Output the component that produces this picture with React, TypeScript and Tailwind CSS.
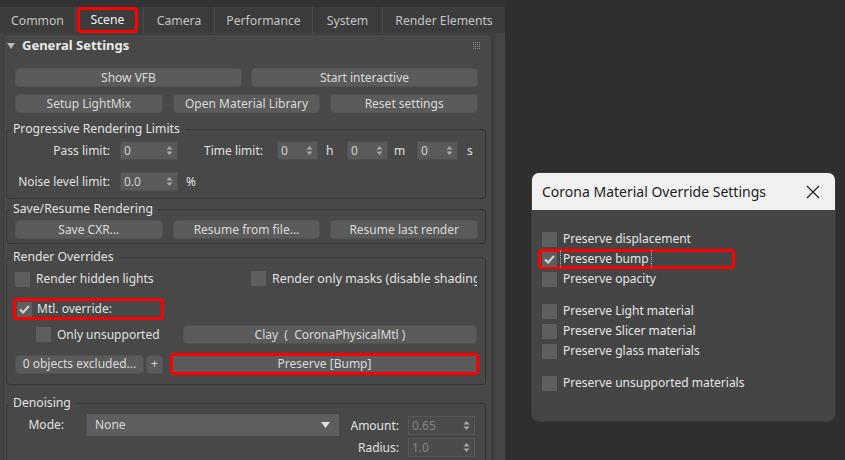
import React from 'react';

type Kids = { children?: React.ReactNode; className?: string };

function Arrows() {
  return (
    <svg width="7" height="11" viewBox="0 0 7 11" className="shrink-0">
      <path d="M0.5 4.5 L3.5 1 L6.5 4.5 Z" fill="#a8a8a8" />
      <path d="M0.5 6.5 L3.5 10 L6.5 6.5 Z" fill="#a8a8a8" />
    </svg>
  );
}

function Check() {
  return (
    <svg width="11" height="9" viewBox="0 0 11 9">
      <path d="M1 4.5 L4 7.5 L10 1" fill="none" stroke="#cfcfcf" strokeWidth="2.2" />
    </svg>
  );
}

function Box({ checked = false }: { checked?: boolean }) {
  return (
    <div className="w-[15px] h-[15px] shrink-0 bg-[#5e5e5e] flex items-center justify-center">
      {checked && <Check />}
    </div>
  );
}

function Btn({ children, className = '' }: Kids) {
  return (
    <div
      className={`h-[19px] rounded-[4px] bg-[#5b5b5b] border border-[#525252] text-[#dadada] flex items-center justify-center whitespace-nowrap ${className}`}
    >
      {children}
    </div>
  );
}

function Spinner({
  value,
  className = '',
  disabled = false,
}: {
  value: string;
  className?: string;
  disabled?: boolean;
}) {
  return (
    <div
      className={`h-[19px] flex items-center pr-[4px] border ${
        disabled
          ? 'bg-[#4b4b4b] border-[#575757] text-[#858585]'
          : 'bg-[#5a5a5a] border-[#505050] text-[#d2d2d2]'
      } ${className}`}
    >
      <span className="flex-1 pl-[3px]">{value}</span>
      <Arrows />
    </div>
  );
}

function Group({ label, children, className = '' }: Kids & { label: string }) {
  return (
    <fieldset className={`ml-[2px] w-[480px] border border-[#353535] rounded-[4px] ${className}`}>
      <legend className="ml-[3px] pl-[3px] pr-[5px] leading-[16px] text-[12.2px] text-[#e2e2e2]">
        {label}
      </legend>
      {children}
    </fieldset>
  );
}

const tabs = [
  { name: 'Common', w: 'w-[76px]' },
  { name: 'Scene', w: 'w-[68px]' },
  { name: 'Camera', w: 'w-[71px]' },
  { name: 'Performance', w: 'w-[98px]' },
  { name: 'System', w: 'w-[70px]' },
];

function TabBar() {
  return (
    <div className="h-[26px] flex bg-[#3c3c3c] text-[12.2px] text-[#c4c4c4]">
      {tabs.map((t) =>
        t.name === 'Scene' ? (
          <div key={t.name} className={`${t.w} border-r border-[#4b4b4b] flex`}>
            <div className="ml-[1px] w-[61px] h-[26px] border-[3px] border-[#ff0000] rounded-[4px] flex items-center justify-center pt-px text-[#f2f2f2]">
              Scene
            </div>
          </div>
        ) : (
          <div
            key={t.name}
            className={`${t.w} border-r border-[#4b4b4b] flex items-center justify-center pt-[2px]`}
          >
            {t.name}
          </div>
        )
      )}
      <div className="flex-1 flex items-center justify-center pt-[2px]">Render Elements</div>
    </div>
  );
}

function Grip() {
  const dots = [];
  for (let r = 0; r < 4; r++)
    for (let c = 0; c < 4; c++)
      dots.push(<rect key={`${r}-${c}`} x={c * 2} y={r * 2} width="1" height="1" fill="#8c8c8c" />);
  return (
    <svg width="7" height="7" viewBox="0 0 7 7" className="ml-auto mr-[11px]">
      {dots}
    </svg>
  );
}

function Rollout() {
  return (
    <div className="w-[489px] shrink-0 bg-[#484848] border border-b-0 border-[#3a3a3a] rounded-t-[5px] overflow-hidden">
      {/* 見出し */}
      <div className="h-[21px] flex items-center">
        <svg width="8" height="6" viewBox="0 0 8 6" className="ml-[3px]">
          <path d="M0 0 L8 0 L4 6 Z" fill="#b9b9b9" />
        </svg>
        <span className="ml-[7px] text-[13px] font-bold text-[#e8e8e8]">General Settings</span>
        <Grip />
      </div>

      <div className="ml-[11px] w-[463px] mt-[12px] grid grid-cols-2 gap-[9px]">
        <Btn>Show VFB</Btn>
        <Btn>Start interactive</Btn>
      </div>
      <div className="ml-[11px] w-[463px] mt-[7px] grid grid-cols-3 gap-[10px]">
        <Btn>Setup LightMix</Btn>
        <Btn>Open Material Library</Btn>
        <Btn>Reset settings</Btn>
      </div>

      {/* Progressive Rendering Limits */}
      <Group label="Progressive Rendering Limits" className="mt-[8px] pb-[7px]">
        <div className="mt-[4px] h-[19px] flex items-center text-[#e0e0e0]">
          <div className="w-[103px] text-right">Pass limit:</div>
          <Spinner value="0" className="ml-[10px] w-[58px]" />
          <div className="ml-[26px] w-[63px]">Time limit:</div>
          <Spinner value="0" className="ml-[10px] w-[41px]" />
          <div className="w-[29px] pl-[8px]">h</div>
          <Spinner value="0" className="w-[41px]" />
          <div className="w-[29px] pl-[6px]">m</div>
          <Spinner value="0" className="w-[41px]" />
          <div className="pl-[9px]">s</div>
        </div>
        <div className="mt-[12px] h-[19px] flex items-center text-[#e0e0e0]">
          <div className="w-[103px] text-right">Noise level limit:</div>
          <Spinner value="0.0" className="ml-[10px] w-[58px]" />
          <div className="ml-[8px]">%</div>
        </div>
      </Group>

      {/* Save/Resume Rendering */}
      <Group label="Save/Resume Rendering" className="mt-[2px] pb-[4px]">
        <div className="ml-[8px] w-[463px] mt-[3px] grid grid-cols-3 gap-[10px]">
          <Btn>Save CXR...</Btn>
          <Btn>Resume from file...</Btn>
          <Btn>Resume last render</Btn>
        </div>
      </Group>

      {/* Render Overrides */}
      <Group label="Render Overrides" className="mt-[5px] pb-[9px]">
        <div className="mt-[4px] h-[20px] flex items-center text-[#e2e2e2]">
          <div className="ml-[8px] w-[236px] flex items-center gap-[6px]">
            <Box />
            <span>Render hidden lights</span>
          </div>
          <div className="w-[226px] flex items-center gap-[6px] overflow-hidden whitespace-nowrap">
            <Box />
            <span className="text-[12.4px]">Render only masks (disable shading)</span>
          </div>
        </div>
        <div className="mt-[9px] ml-[6px] w-[151px] h-[22px] border-[3px] border-[#ff0000] rounded-[4px] flex items-center gap-[5px] pl-px text-[#e2e2e2]">
          <Box checked />
          <span>Mtl. override:</span>
        </div>
        <div className="mt-[5px] h-[19px] flex items-center text-[#e2e2e2]">
          <div className="ml-[29px] w-[147px] flex items-center gap-[6px]">
            <Box />
            <span>Only unsupported</span>
          </div>
          <Btn className="w-[294px]">Clay&nbsp; (&nbsp; CoronaPhysicalMtl )</Btn>
        </div>
        <div className="mt-[9px] h-[22px] flex items-center">
          <Btn className="ml-[8px] w-[129px]">0 objects excluded...</Btn>
          <Btn className="ml-[2px] w-[17px]">+</Btn>
          <div className="ml-[7px] w-[309px] h-[22px] border-[3px] border-[#ff0000] rounded-[4px] flex items-stretch">
            <div className="flex-1 bg-[#5b5b5b] text-[#dadada] flex items-center justify-center">
              Preserve [Bump]
            </div>
          </div>
        </div>
      </Group>

      {/* Denoising */}
      <Group label="Denoising" className="mt-[10px] pb-[10px]">
        <div className="mt-[3px] flex items-start text-[#e2e2e2]">
          <div className="w-[57px] h-[22px] flex items-center justify-end">Mode:</div>
          <div className="ml-[23px] w-[252px] h-[22px] bg-[#5e5e5e] flex items-center pl-[8px] pr-[9px] text-[#dadada]">
            <span className="flex-1">None</span>
            <svg width="9" height="6" viewBox="0 0 9 6">
              <path d="M0 0 L9 0 L4.5 6 Z" fill="#e0e0e0" />
            </svg>
          </div>
          <div className="ml-[8px] flex flex-col gap-[3px] pt-[2px]">
            <div className="h-[19px] flex items-center">
              <div className="w-[52px] text-right">Amount:</div>
              <Spinner value="0.65" disabled className="ml-[9px] w-[67px]" />
            </div>
            <div className="h-[19px] flex items-center">
              <div className="w-[52px] text-right">Radius:</div>
              <Spinner value="1.0" disabled className="ml-[9px] w-[67px]" />
            </div>
          </div>
        </div>
      </Group>
    </div>
  );
}

const opts: { label: string; checked?: boolean; focus?: boolean; gap?: boolean }[] = [
  { label: 'Preserve displacement' },
  { label: 'Preserve bump', checked: true, focus: true },
  { label: 'Preserve opacity' },
  { label: 'Preserve Light material', gap: true },
  { label: 'Preserve Slicer material' },
  { label: 'Preserve glass materials' },
  { label: 'Preserve unsupported materials', gap: true },
];

function Dialog() {
  return (
    <div className="w-[305px] h-[250px] rounded-[8px] overflow-hidden bg-[#454545] border border-[#3a3a3a] flex flex-col">
      <div className="h-[37px] bg-[#f1f1f1] flex items-center pl-[10px] pr-[15px] text-[#1c1c1c]">
        <span className="flex-1 text-[14px]">Corona Material Override Settings</span>
        <svg width="14" height="14" viewBox="0 0 14 14">
          <path d="M1 1 L13 13 M13 1 L1 13" stroke="#222" strokeWidth="1.2" />
        </svg>
      </div>
      <div className="pt-[19px] pl-[6px] text-[12px] text-[#e6e6e6]">
        {opts.map((o) => (
          <div
            key={o.label}
            className={`w-[197px] h-[20px] rounded-[4px] border-[3px] flex items-center gap-[3px] pl-px ${
              o.focus ? 'border-[#ff0000]' : 'border-transparent'
            } ${o.gap ? 'mt-[12px]' : ''}`}
          >
            <Box checked={o.checked} />
            <span
              className={`whitespace-nowrap px-[2px] ${
                o.focus ? 'border-x border-dotted border-[#bdbdbd]' : 'border-x border-transparent'
              }`}
            >
              {o.label}
            </span>
          </div>
        ))}
      </div>
    </div>
  );
}

export default function App() {
  return (
    <div className="w-[845px] h-[460px] overflow-hidden bg-[#2f2f2f] flex text-[12px] font-['Noto_Sans',sans-serif]">
      <div className="w-[505px] h-full shrink-0 flex flex-col">
        <div className="h-[7px] bg-[#333333]" />
        <TabBar />
        <div className="flex-1 flex bg-[#434343] pt-px pl-[3px] overflow-hidden">
          <Rollout />
          <div className="flex-1 bg-[#464646] border-l-[3px] border-[#3e3e3e]" />
        </div>
      </div>
      <div className="flex-1 pl-[26px] pt-[172px]">
        <Dialog />
      </div>
    </div>
  );
}
